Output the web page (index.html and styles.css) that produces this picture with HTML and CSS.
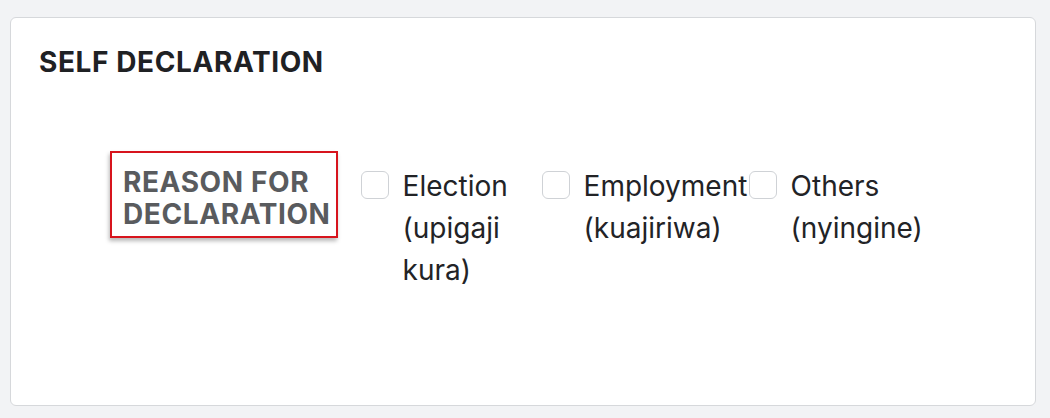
FILE: index.html
```html
<!DOCTYPE html>
<html lang="en">
<head>
<meta charset="utf-8">
<title>Self Declaration</title>
<link rel="stylesheet" href="styles.css">
</head>
<body>
  <section class="card">
    <h2 class="card-title">SELF DECLARATION</h2>
    <div class="reason-row">
      <div class="reason-label">REASON FOR<br>DECLARATION</div>
      <div class="options">
        <label class="option"><input type="checkbox" class="check"><span class="option-text">Election (upigaji kura)</span></label>
        <label class="option"><input type="checkbox" class="check"><span class="option-text">Employment (kuajiriwa)</span></label>
        <label class="option"><input type="checkbox" class="check"><span class="option-text">Others (nyingine)</span></label>
      </div>
    </div>
  </section>
</body>
</html>
```
FILE: styles.css
```css
html, body {
  margin: 0;
  padding: 0;
}
body {
  background: #f2f3f5;
  font-family: Inter, "Noto Sans", "Liberation Sans", sans-serif;
  color: #212121;
  padding: 17px 14px 12px 10px;
  height: 418px;
  box-sizing: border-box;
}
.card {
  background: #ffffff;
  border: 1px solid #d6d8db;
  border-radius: 6px;
  height: 389px;
  box-sizing: border-box;
  padding: 27px 28px 0 28px;
}
.card-title {
  margin: 0;
  font-size: 28px;
  font-weight: 700;
  line-height: 34px;
  letter-spacing: 0.6px;
  color: #1f2124;
}
.reason-row {
  display: flex;
  align-items: flex-start;
  margin-top: 72px;
  padding-left: 71px;
  gap: 23px;
}
.reason-label {
  border: 2px solid #d7141d;
  box-shadow: -1px 3px 4px rgba(0, 0, 0, 0.28);
  padding: 13px 5px 6px 11px;
  font-size: 28px;
  font-weight: 700;
  line-height: 32px;
  letter-spacing: 0.6px;
  color: #595b5e;
}
.options {
  display: grid;
  grid-template-columns: 181px 207px 181px;
  padding-top: 14px;
}
.option {
  display: flex;
  align-items: flex-start;
  gap: 14px;
  font-size: 28px;
  line-height: 42px;
  color: #222326;
}
.check {
  appearance: none;
  -webkit-appearance: none;
  margin: 6px 0 0 0;
  flex: 0 0 auto;
  width: 28px;
  height: 28px;
  border: 1px solid #cfd2d6;
  border-radius: 6px;
  background: #fff;
}
.option-text {
  white-space: normal;
}
```
